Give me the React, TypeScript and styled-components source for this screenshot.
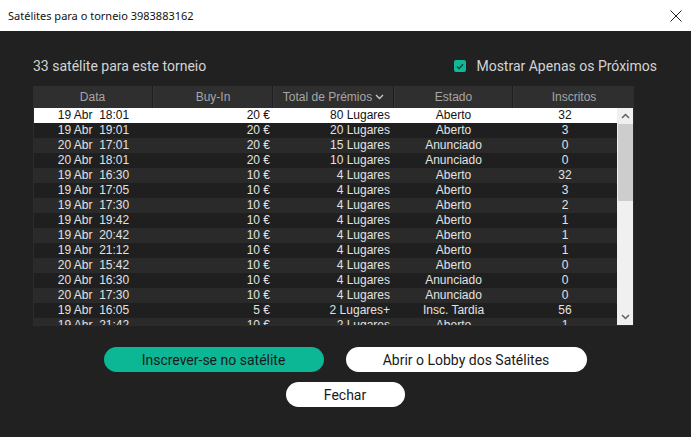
import React from "react";
import styled, { createGlobalStyle } from "styled-components";

const GlobalStyle = createGlobalStyle`
  html, body { margin: 0; padding: 0; background: #212121; }
  * { box-sizing: border-box; }
`;

const Window = styled.div`
  width: 691px;
  height: 437px;
  display: flex;
  flex-direction: column;
  background: #212121;
  overflow: hidden;
`;

const TitleBar = styled.div`
  height: 31px;
  flex: none;
  background: #ffffff;
  display: flex;
  align-items: center;
  justify-content: space-between;
  padding: 0 9px 0 8px;
  font-family: "Noto Sans", "Open Sans", sans-serif;
  font-size: 11px;
  color: #111;
`;

const CloseIcon = styled.svg`
  width: 12px;
  height: 12px;
  display: block;
`;

const Content = styled.div`
  flex: 1;
  display: flex;
  flex-direction: column;
  padding: 25px 34px 0 33px;
`;

const TopRow = styled.div`
  height: 20px;
  display: flex;
  align-items: center;
  justify-content: space-between;
  font-family: Roboto, "Noto Sans", sans-serif;
  font-size: 14px;
  color: #d4d4d4;
`;

const CheckLabel = styled.div`
  display: flex;
  align-items: center;
  gap: 10px;
`;

const CheckBox = styled.span`
  width: 12px;
  height: 12px;
  border-radius: 2px;
  background: #0fb897;
  display: flex;
  align-items: center;
  justify-content: center;
`;

const Table = styled.div`
  margin-top: 10px;
  width: 601px;
  display: flex;
  flex-direction: column;
  font-family: "Liberation Sans", Arial, sans-serif;
  font-size: 12px;
`;

const HeaderRow = styled.div`
  height: 22px;
  display: flex;
  background: #2f2f2f;
`;

const HeaderCell = styled.div<{ $w: number }>`
  width: ${(p) => p.$w}px;
  flex: none;
  display: flex;
  align-items: center;
  justify-content: center;
  gap: 3px;
  color: #a6a6a6;
  border-right: 1px solid #1d1d1d;
  border-left: 1px solid #383838;
  &:first-child { border-left: none; }
  &:last-child { border-right: none; }
`;

const Body = styled.div`
  height: 218px;
  display: flex;
  border: 1px solid #2c2c2c;
  border-top: none;
  overflow: hidden;
`;

const Rows = styled.div`
  width: 583px;
  flex: none;
  display: flex;
  flex-direction: column;
  overflow: hidden;
`;

const Row = styled.div<{ $selected: boolean; $alt: boolean }>`
  height: 15px;
  flex: none;
  display: flex;
  align-items: center;
  background: ${(p) => (p.$selected ? "#ffffff" : p.$alt ? "#1f1f1f" : "#2a2a2a")};
  color: ${(p) => (p.$selected ? "#111111" : "#e2e2e2")};
`;

const Cell = styled.div<{ $w: number; $align: "left" | "center" | "right"; $pr?: number }>`
  width: ${(p) => p.$w}px;
  flex: none;
  text-align: ${(p) => p.$align};
  padding-right: ${(p) => p.$pr ?? 0}px;
  white-space: pre;
  overflow: hidden;
  line-height: 15px;
`;

const ScrollBar = styled.div`
  width: 17px;
  flex: none;
  background: #f0f0f0;
  display: flex;
  flex-direction: column;
`;

const ScrollArrow = styled.div`
  height: 16px;
  flex: none;
  display: flex;
  align-items: center;
  justify-content: center;
`;

const ScrollThumb = styled.div`
  margin: 0 1px;
  height: 77px;
  background: #cdcdcd;
  flex: none;
`;

const ScrollSpace = styled.div`
  flex: 1;
`;

const Buttons = styled.div`
  margin-top: 21px;
  display: flex;
  flex-direction: column;
  align-items: center;
  gap: 10px;
  width: 624px;
`;

const ButtonRow = styled.div`
  display: flex;
  gap: 22px;
  align-items: center;
`;

const Pill = styled.button<{ $primary?: boolean; $w: number }>`
  width: ${(p) => p.$w}px;
  height: 25px;
  border-radius: 13px;
  border: none;
  padding: 0;
  background: ${(p) => (p.$primary ? "#0cb795" : "#ffffff")};
  color: #1a1a1a;
  font-family: Roboto, "Noto Sans", sans-serif;
  font-size: 14px;
  cursor: pointer;
`;

type R = [string, string, string, string, string];
const rows: R[] = [
  ["19 Abr  18:01", "20 €", "80 Lugares", "Aberto", "32"],
  ["19 Abr  19:01", "20 €", "20 Lugares", "Aberto", "3"],
  ["20 Abr  17:01", "20 €", "15 Lugares", "Anunciado", "0"],
  ["20 Abr  18:01", "20 €", "10 Lugares", "Anunciado", "0"],
  ["19 Abr  16:30", "10 €", "4 Lugares", "Aberto", "32"],
  ["19 Abr  17:05", "10 €", "4 Lugares", "Aberto", "3"],
  ["19 Abr  17:30", "10 €", "4 Lugares", "Aberto", "2"],
  ["19 Abr  19:42", "10 €", "4 Lugares", "Aberto", "1"],
  ["19 Abr  20:42", "10 €", "4 Lugares", "Aberto", "1"],
  ["19 Abr  21:12", "10 €", "4 Lugares", "Aberto", "1"],
  ["20 Abr  15:42", "10 €", "4 Lugares", "Aberto", "0"],
  ["20 Abr  16:30", "10 €", "4 Lugares", "Anunciado", "0"],
  ["20 Abr  17:30", "10 €", "4 Lugares", "Anunciado", "0"],
  ["19 Abr  16:05", "5 €", "2 Lugares+", "Insc. Tardia", "56"],
  ["19 Abr  21:42", "10 €", "2 Lugares", "Aberto", "1"],
];

export default function App() {
  return (
    <>
      <GlobalStyle />
      <Window>
        <TitleBar>
          <span>Satélites para o torneio 3983883162</span>
          <CloseIcon viewBox="0 0 12 12">
            <path d="M0.5 0.5 L11.5 11.5 M11.5 0.5 L0.5 11.5" stroke="#222" strokeWidth="1" fill="none" />
          </CloseIcon>
        </TitleBar>
        <Content>
          <TopRow>
            <span>33 satélite para este torneio</span>
            <CheckLabel>
              <CheckBox>
                <svg width="8" height="7" viewBox="0 0 8 7">
                  <path d="M1 3.6 L3.1 5.6 L7 1.3" stroke="#0d3a30" strokeWidth="1.4" fill="none" />
                </svg>
              </CheckBox>
              <span>Mostrar Apenas os Próximos</span>
            </CheckLabel>
          </TopRow>
          <Table>
            <HeaderRow>
              <HeaderCell $w={120}>Data</HeaderCell>
              <HeaderCell $w={120}>Buy-In</HeaderCell>
              <HeaderCell $w={121}>
                Total de Prémios
                <svg width="9" height="6" viewBox="0 0 9 6">
                  <path d="M1 1 L4.5 4.5 L8 1" stroke="#c8c8c8" strokeWidth="1.4" fill="none" />
                </svg>
              </HeaderCell>
              <HeaderCell $w={119}>Estado</HeaderCell>
              <HeaderCell $w={121}>Inscritos</HeaderCell>
            </HeaderRow>
            <Body>
              <Rows>
                {rows.map((r, i) => (
                  <Row key={i} $selected={i === 0} $alt={i % 2 === 1}>
                    <Cell $w={119} $align="center">{r[0]}</Cell>
                    <Cell $w={120} $align="right" $pr={3}>{r[1]}</Cell>
                    <Cell $w={121} $align="right" $pr={4}>{r[2]}</Cell>
                    <Cell $w={119} $align="center">{r[3]}</Cell>
                    <Cell $w={104} $align="center">{r[4]}</Cell>
                  </Row>
                ))}
              </Rows>
              <ScrollBar>
                <ScrollArrow>
                  <svg width="9" height="6" viewBox="0 0 9 6">
                    <path d="M1 5 L4.5 1.5 L8 5" stroke="#606060" strokeWidth="1.5" fill="none" />
                  </svg>
                </ScrollArrow>
                <ScrollThumb />
                <ScrollSpace />
                <ScrollArrow>
                  <svg width="9" height="6" viewBox="0 0 9 6">
                    <path d="M1 1 L4.5 4.5 L8 1" stroke="#606060" strokeWidth="1.5" fill="none" />
                  </svg>
                </ScrollArrow>
              </ScrollBar>
            </Body>
          </Table>
          <Buttons>
            <ButtonRow>
              <Pill $primary $w={220}>Inscrever-se no satélite</Pill>
              <Pill $w={241}>Abrir o Lobby dos Satélites</Pill>
            </ButtonRow>
            <Pill $w={119}>Fechar</Pill>
          </Buttons>
        </Content>
      </Window>
    </>
  );
}
